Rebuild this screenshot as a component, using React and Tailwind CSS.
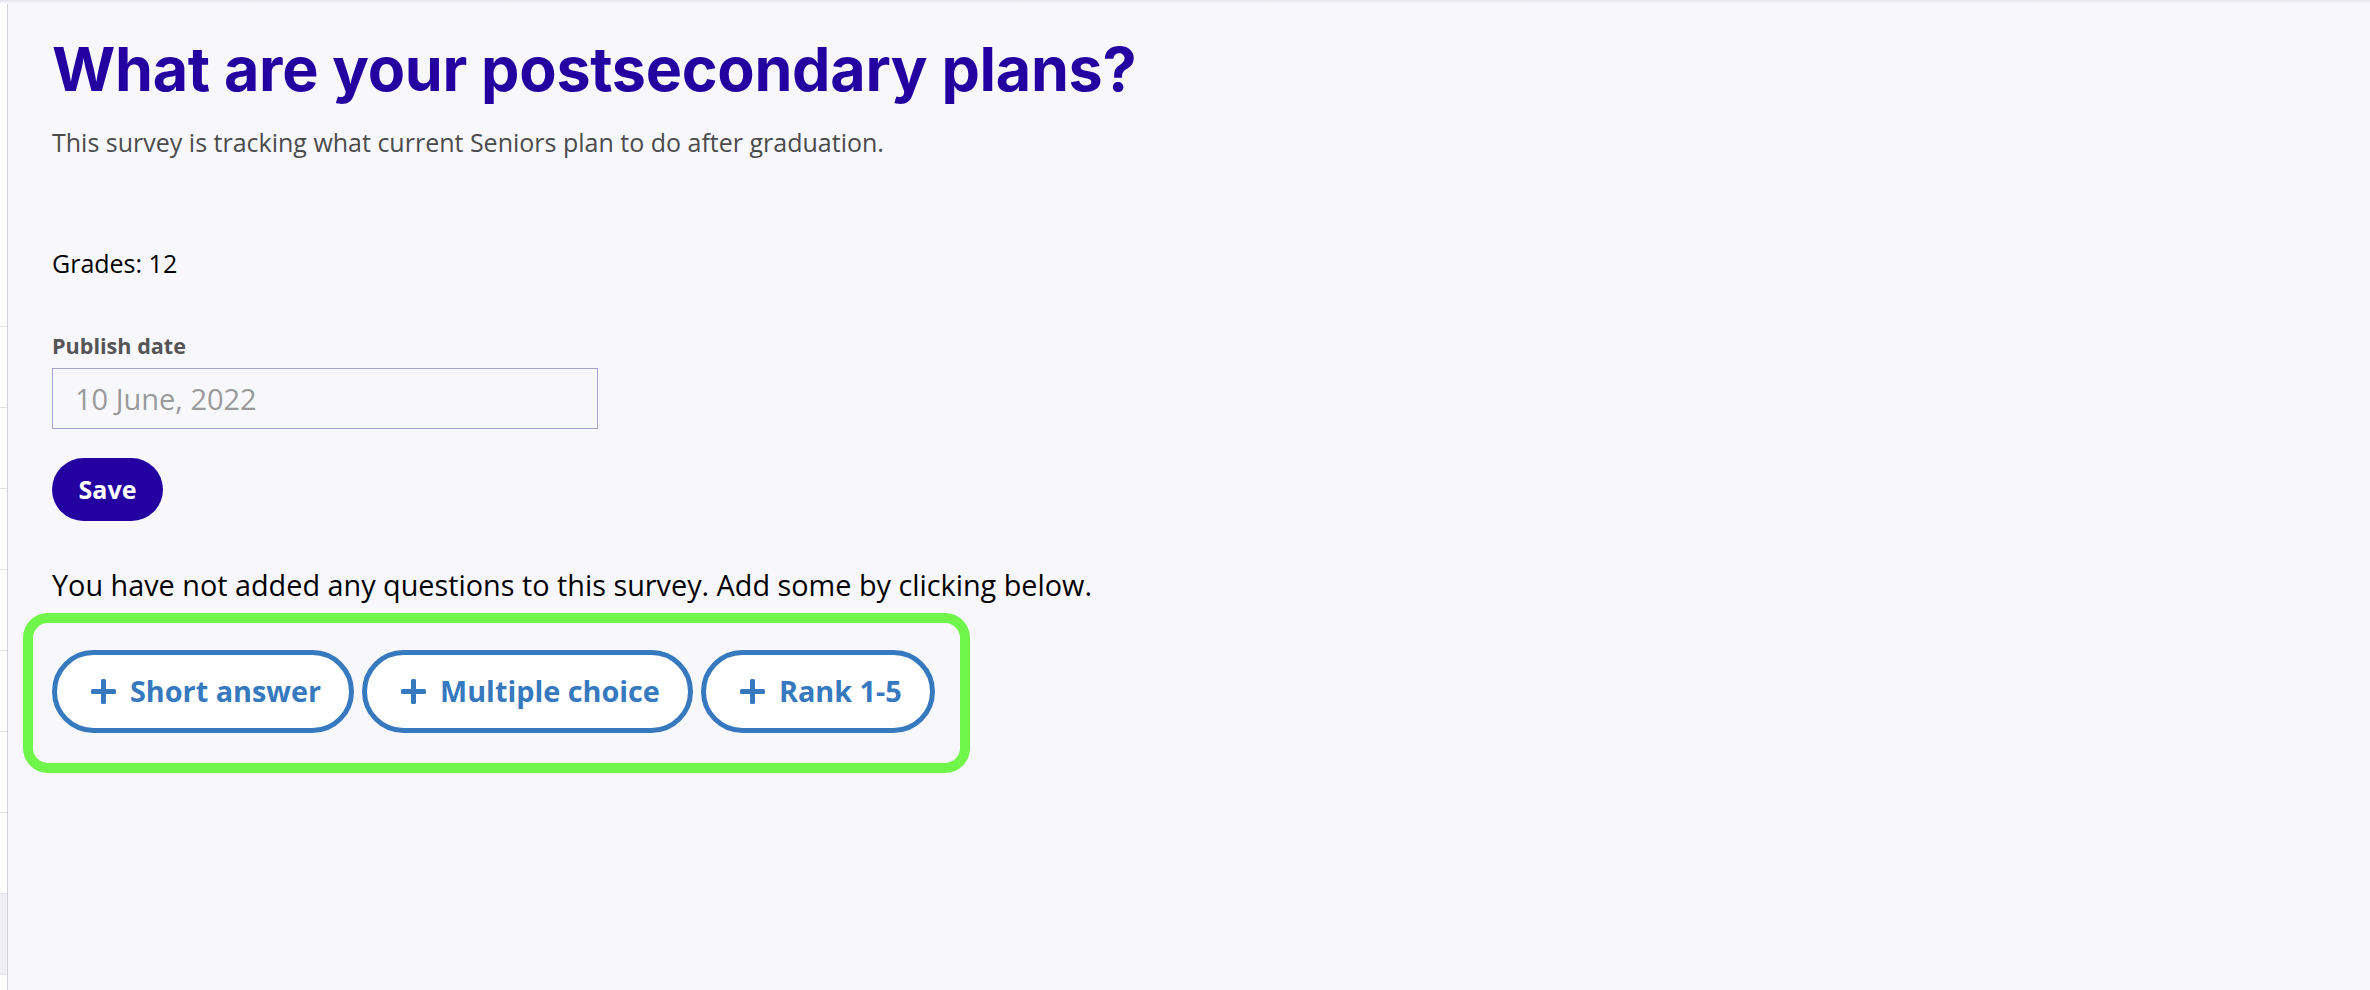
import React from "react";

const questionTypes = [
  { label: "Short answer" },
  { label: "Multiple choice" },
  { label: "Rank 1-5" },
];

function Plus() {
  return (
    <svg width="25" height="25" viewBox="0 0 25 25" className="shrink-0">
      <rect x="10" y="0" width="5" height="25" rx="1.5" fill="#3679be" />
      <rect x="0" y="10" width="25" height="5" rx="1.5" fill="#3679be" />
    </svg>
  );
}

function SideStrip() {
  const rows = [0, 1, 2, 3, 4, 5, 6, 7];
  return (
    <div className="w-[8px] shrink-0 border-r border-[#d3d3dd] bg-white flex flex-col">
      <div className="h-[323px] border-b border-[#e2e2e8]" />
      {rows.map(i => (
        <div
          key={i}
          className={
            i === 7
              ? "h-[81px] border-b border-[#e2e2e8] bg-[#eeeef4]"
              : "h-[81px] border-b border-[#e2e2e8]"
          }
        />
      ))}
    </div>
  );
}

export default function App() {
  return (
    <div
      className="min-h-screen bg-[#f8f8fc] flex flex-col"
      style={{ fontFamily: "'Open Sans', 'Liberation Sans', sans-serif" }}
    >
      <div className="h-[4px] bg-gradient-to-b from-[#e4e4ea] to-[#f8f8fc]" />
      <div className="flex flex-1">
        <SideStrip />
        <main className="flex-1 pl-[44px] flex flex-col items-start">
          <h1
            className="mt-[35px] text-[61px] leading-none font-bold text-[#23009f] tracking-[-0.3px]"
            style={{ fontFamily: "Inter, 'DejaVu Sans', sans-serif" }}
          >
            What are your postsecondary plans?
          </h1>
          <p className="mt-[30px] text-[25px] leading-none text-[#4b4b4b]">
            This survey is tracking what current Seniors plan to do after graduation.
          </p>

          <p className="mt-[96px] text-[25px] leading-none text-black">Grades: 12</p>

          <label className="mt-[59px] text-[21.6px] leading-none font-bold text-[#555555]">
            Publish date
          </label>
          <div className="mt-[11px] w-[546px] h-[61px] border-[1.5px] border-[#a3a3d1] flex items-center pl-[22px]">
            <span className="text-[29px] leading-none text-[#9a9a9a]">10 June, 2022</span>
          </div>

          <button className="mt-[29px] w-[111px] h-[63px] rounded-full bg-[#23009f] text-white text-[25px] leading-none font-bold">
            Save
          </button>

          <p className="mt-[50px] text-[28.8px] leading-none text-black">
            You have not added any questions to this survey. Add some by clicking below.
          </p>

          <div className="mt-[14px] -ml-[29px] w-[947px] h-[160px] border-[10px] border-[#70f54b] rounded-[25px] pt-[27px] pl-[19px]">
            <div className="flex gap-[8px]">
              {questionTypes.map(q => (
                <button
                  key={q.label}
                  className="h-[83px] rounded-full border-[5px] border-[#3679be] bg-white flex items-center gap-[14px] pl-[34px] pr-[28px] text-[28.8px] leading-none font-bold text-[#3679be]"
                >
                  <Plus />
                  <span>{q.label}</span>
                </button>
              ))}
            </div>
          </div>
        </main>
      </div>
    </div>
  );
}
